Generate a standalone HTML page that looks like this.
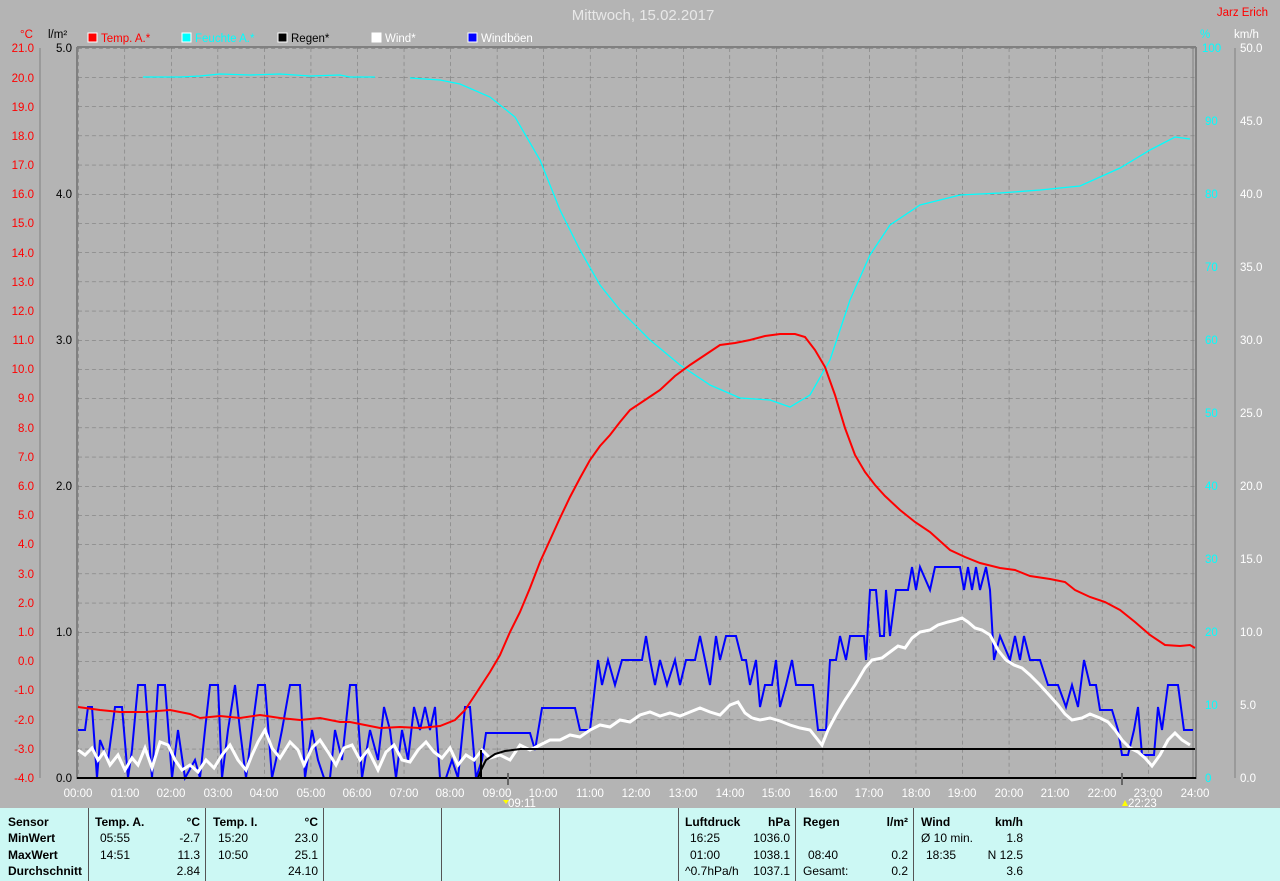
<!DOCTYPE html>
<html><head><meta charset="utf-8"><style>
body{margin:0;width:1280px;height:881px;overflow:hidden;background:#b4b4b4;font-family:"Liberation Sans",sans-serif}
svg{position:absolute;left:0;top:0}
.p{position:absolute;top:808px;height:73px;background:#ccf8f4;left:0;width:1280px}
.c{position:absolute;top:0;height:73px;border-left:1px solid #555;font-size:12px;color:#000}
.r{position:absolute;white-space:pre}
b{font-weight:bold}
</style></head><body>
<svg width="1280" height="881" font-family="Liberation Sans, sans-serif" font-size="11.5">
<defs><pattern id="g" x="78" y="48" width="46.54" height="29.2" patternUnits="userSpaceOnUse">
<line x1="0" y1="0" x2="46.54" y2="0" stroke="#6e6e6e" stroke-dasharray="4,3"/>
<line x1="0" y1="0" x2="0" y2="29.2" stroke="#6e6e6e" stroke-dasharray="4,3"/></pattern></defs>
<rect x="78" y="48" width="1118" height="730" fill="url(#g)"/>
<line x1="77" y1="47" x2="1196" y2="47" stroke="#808080" stroke-width="2"/>
<line x1="77" y1="47" x2="77" y2="779" stroke="#808080" stroke-width="2"/>
<line x1="1196" y1="47" x2="1196" y2="779" stroke="#808080" stroke-width="2"/>
<line x1="1193" y1="48" x2="1193" y2="778" stroke="#808080"/>
<line x1="40" y1="48" x2="40" y2="778" stroke="#808080"/>
<line x1="1235" y1="48" x2="1235" y2="778" stroke="#808080"/>
<line x1="77" y1="778" x2="1196" y2="778" stroke="#000" stroke-width="2"/>
<text x="643" y="20" text-anchor="middle" font-size="15" fill="#e8e8e8">Mittwoch, 15.02.2017</text>
<text x="1268" y="16" text-anchor="end" fill="#f00">Jarz Erich</text>
<text x="20" y="38" fill="#f00">°C</text><text x="48" y="38" fill="#000">l/m²</text>
<text x="1200" y="38" fill="#0ff">%</text><text x="1234" y="38" fill="#fff">km/h</text>
<g><rect x="88" y="33" width="9" height="9" fill="#f00" stroke="#fff"/><text x="101" y="42" fill="#f00">Temp. A.*</text>
<rect x="182" y="33" width="9" height="9" fill="#0ff" stroke="#fff"/><text x="195" y="42" fill="#0ff">Feuchte A.*</text>
<rect x="278" y="33" width="9" height="9" fill="#000" stroke="#fff"/><text x="291" y="42" fill="#000">Regen*</text>
<rect x="372" y="33" width="9" height="9" fill="#fff" stroke="#fff"/><text x="385" y="42" fill="#fff">Wind*</text>
<rect x="468" y="33" width="9" height="9" fill="#00f" stroke="#fff"/><text x="481" y="42" fill="#fff">Windböen</text></g>
<g fill="#f00" text-anchor="end">
<text x="34" y="52">21.0</text><text x="34" y="82">20.0</text><text x="34" y="111">19.0</text><text x="34" y="140">18.0</text><text x="34" y="169">17.0</text><text x="34" y="198">16.0</text><text x="34" y="227">15.0</text><text x="34" y="257">14.0</text><text x="34" y="286">13.0</text><text x="34" y="315">12.0</text><text x="34" y="344">11.0</text><text x="34" y="373">10.0</text><text x="34" y="402">9.0</text><text x="34" y="432">8.0</text><text x="34" y="461">7.0</text><text x="34" y="490">6.0</text><text x="34" y="519">5.0</text><text x="34" y="548">4.0</text><text x="34" y="578">3.0</text><text x="34" y="607">2.0</text><text x="34" y="636">1.0</text><text x="34" y="665">0.0</text><text x="34" y="694">-1.0</text><text x="34" y="724">-2.0</text><text x="34" y="753">-3.0</text><text x="34" y="782">-4.0</text></g>
<g fill="#000" text-anchor="end"><text x="72" y="52">5.0</text><text x="72" y="198">4.0</text><text x="72" y="344">3.0</text><text x="72" y="490">2.0</text><text x="72" y="636">1.0</text><text x="72" y="782">0.0</text></g>
<g fill="#0ff"><text x="1202" y="52">100</text><text x="1205" y="125">90</text><text x="1205" y="198">80</text><text x="1205" y="271">70</text><text x="1205" y="344">60</text><text x="1205" y="417">50</text><text x="1205" y="490">40</text><text x="1205" y="563">30</text><text x="1205" y="636">20</text><text x="1205" y="709">10</text><text x="1205" y="782">0</text></g>
<g fill="#fff"><text x="1240" y="52">50.0</text><text x="1240" y="125">45.0</text><text x="1240" y="198">40.0</text><text x="1240" y="271">35.0</text><text x="1240" y="344">30.0</text><text x="1240" y="417">25.0</text><text x="1240" y="490">20.0</text><text x="1240" y="563">15.0</text><text x="1240" y="636">10.0</text><text x="1240" y="709">5.0</text><text x="1240" y="782">0.0</text></g>
<g fill="#fff" text-anchor="middle">
<text x="78" y="797">00:00</text><text x="125" y="797">01:00</text><text x="171" y="797">02:00</text><text x="218" y="797">03:00</text><text x="264" y="797">04:00</text><text x="311" y="797">05:00</text><text x="357" y="797">06:00</text><text x="404" y="797">07:00</text><text x="450" y="797">08:00</text><text x="497" y="797">09:00</text><text x="543" y="797">10:00</text><text x="590" y="797">11:00</text><text x="636" y="797">12:00</text><text x="683" y="797">13:00</text><text x="730" y="797">14:00</text><text x="776" y="797">15:00</text><text x="823" y="797">16:00</text><text x="869" y="797">17:00</text><text x="916" y="797">18:00</text><text x="962" y="797">19:00</text><text x="1009" y="797">20:00</text><text x="1055" y="797">21:00</text><text x="1102" y="797">22:00</text><text x="1148" y="797">23:00</text><text x="1195" y="797">24:00</text></g>
<text x="508" y="807" fill="#fff">09:11</text><text x="1128" y="807" fill="#fff">22:23</text>
<path d="M503 800l3 4 3-4z" fill="#ff0"/><path d="M1122 806l3-6 3 6z" fill="#ff0"/>
<polyline fill="none" stroke="#0ff" stroke-width="1.3" points="143,77 180,77 200,76 220,74 250,75 280,74 310,76 340,75 350,77 375,77"/>
<polyline fill="none" stroke="#0ff" stroke-width="1.3" points="410,78 440,80 460,84 490,97 515,117 540,160 560,210 580,250 600,285 620,310 650,340 680,365 710,385 740,398 770,400 790,407 810,395 830,360 850,300 870,255 890,225 920,205 960,195 1000,193 1040,190 1080,186 1120,168 1150,150 1175,137 1190,139"/>
<polyline fill="none" stroke="#00f" stroke-width="2" points="78,730 85,730 88,707 92,707 97,778 100,740 108,760 115,707 122,707 128,778 132,750 138,685 145,685 152,778 158,685 165,685 172,778 178,730 185,778 195,760 200,778 205,730 210,685 218,685 222,778 228,730 235,685 240,730 246,778 252,730 258,685 265,685 272,778 276,760 282,730 290,685 300,685 305,778 312,730 318,760 324,778 330,778 335,730 342,760 350,685 356,685 362,778 370,730 378,760 384,707 390,730 396,778 402,730 408,760 414,707 420,730 425,707 430,730 435,707 440,778 446,778 452,760 458,778 465,707 470,707 476,778 482,760 486,733 500,733 530,733 535,750 542,708 575,708 580,730 590,730 598,660 602,685 608,660 615,685 622,660 642,660 646,636 650,660 655,685 660,660 667,685 675,660 680,685 686,660 695,660 700,636 705,660 710,685 716,636 720,660 726,636 736,636 742,660 746,660 750,685 756,660 760,707 765,685 772,685 776,660 780,707 786,685 792,660 796,685 813,685 818,730 826,730 830,660 836,660 840,636 846,660 850,636 864,636 866,660 870,590 876,590 880,636 884,636 886,590 890,636 896,590 900,590 904,590 908,590 912,567 916,590 920,567 930,590 935,567 960,567 964,590 968,567 972,590 976,567 980,590 986,567 990,590 994,660 1000,636 1010,660 1015,636 1020,660 1024,636 1030,660 1040,660 1048,685 1058,685 1066,707 1072,685 1078,707 1084,660 1090,685 1096,685 1100,710 1112,710 1118,730 1122,755 1128,755 1134,730 1138,707 1142,755 1154,755 1158,707 1162,730 1168,685 1178,685 1184,730 1193,730"/>
<polyline fill="none" stroke="#fff" stroke-width="3" points="78,750 85,755 92,748 98,760 104,752 110,765 118,755 125,770 132,758 138,765 145,748 152,768 160,742 168,745 175,760 182,770 190,765 198,772 206,760 214,768 222,755 230,745 238,760 246,770 252,755 258,742 265,730 272,748 280,758 290,742 298,750 304,765 312,748 320,740 328,752 336,765 344,748 352,745 360,760 368,750 378,770 386,752 394,745 402,760 410,762 418,750 426,742 434,752 442,758 450,748 458,765 466,755 474,760 482,750 490,758 500,755 510,760 520,745 530,750 540,745 550,740 560,740 570,735 580,737 590,730 600,725 610,727 620,720 630,722 640,715 650,712 660,716 670,713 680,716 690,712 700,708 710,712 720,715 730,705 738,702 745,713 752,718 760,720 770,718 780,721 790,725 800,728 810,730 818,740 822,745 828,730 836,715 845,700 855,685 865,668 872,660 882,658 890,652 898,646 905,648 912,638 920,632 930,630 938,625 948,622 956,620 962,618 968,622 975,628 982,630 990,635 998,650 1006,660 1014,665 1022,668 1030,675 1040,685 1050,696 1058,705 1065,714 1072,720 1082,718 1090,714 1100,718 1108,722 1115,730 1122,740 1130,748 1138,752 1145,758 1152,766 1160,755 1168,740 1175,733 1182,740 1190,745"/>
<polyline fill="none" stroke="#000" stroke-width="2" points="77,778 478,778 481,770 486,760 495,754 505,751 520,749 540,749 1195,749"/>
<polyline fill="none" stroke="#000" stroke-width="2" points="481,750 481,778"/>
<polyline fill="none" stroke="#f00" stroke-width="2" points="78,707 100,710 120,712 145,712 170,710 190,714 200,718 220,716 240,718 260,715 280,718 300,720 320,718 340,722 350,722 370,726 380,728 400,727 420,728 440,726 455,720 465,710 475,695 490,672 500,655 510,632 520,612 530,588 540,562 550,540 560,518 570,497 580,478 590,460 600,446 610,435 620,422 630,410 645,400 660,390 675,376 690,365 705,355 720,345 735,343 750,340 765,336 780,334 795,334 805,337 815,350 825,367 835,395 845,428 855,455 865,472 875,485 885,496 900,510 915,522 930,532 950,550 965,557 980,563 1000,568 1015,570 1030,576 1050,579 1065,582 1075,590 1090,597 1105,602 1120,610 1135,622 1150,635 1165,645 1180,646 1190,645 1195,648"/>
<line x1="1122" y1="773" x2="1122" y2="785" stroke="#666" stroke-width="2"/><line x1="508" y1="773" x2="508" y2="785" stroke="#666" stroke-width="2"/>
</svg>
<div class="p">
<div class="c" style="left:0;border:none;width:88px"><div class="r" style="left:8px;top:7px"><b>Sensor</b></div><div class="r" style="left:8px;top:23px"><b>MinWert</b></div><div class="r" style="left:8px;top:40px"><b>MaxWert</b></div><div class="r" style="left:8px;top:56px"><b>Durchschnitt</b></div></div>
<div class="c" style="left:88px;width:117px"><div class="r" style="left:6px;top:7px"><b>Temp. A.</b></div><div class="r" style="right:6px;top:7px"><b>°C</b></div><div class="r" style="left:11px;top:23px">05:55</div><div class="r" style="right:6px;top:23px">-2.7</div><div class="r" style="left:11px;top:40px">14:51</div><div class="r" style="right:6px;top:40px">11.3</div><div class="r" style="right:6px;top:56px">2.84</div></div>
<div class="c" style="left:205px;width:118px"><div class="r" style="left:7px;top:7px"><b>Temp. I.</b></div><div class="r" style="right:6px;top:7px"><b>°C</b></div><div class="r" style="left:12px;top:23px">15:20</div><div class="r" style="right:6px;top:23px">23.0</div><div class="r" style="left:12px;top:40px">10:50</div><div class="r" style="right:6px;top:40px">25.1</div><div class="r" style="right:6px;top:56px">24.10</div></div>
<div class="c" style="left:323px;width:118px"></div>
<div class="c" style="left:441px;width:118px"></div>
<div class="c" style="left:559px;width:118px"></div>
<div class="c" style="left:678px;width:117px"><div class="r" style="left:6px;top:7px"><b>Luftdruck</b></div><div class="r" style="right:6px;top:7px"><b>hPa</b></div><div class="r" style="left:11px;top:23px">16:25</div><div class="r" style="right:6px;top:23px">1036.0</div><div class="r" style="left:11px;top:40px">01:00</div><div class="r" style="right:6px;top:40px">1038.1</div><div class="r" style="left:6px;top:56px">^0.7hPa/h</div><div class="r" style="right:6px;top:56px">1037.1</div></div>
<div class="c" style="left:795px;width:118px"><div class="r" style="left:7px;top:7px"><b>Regen</b></div><div class="r" style="right:6px;top:7px"><b>l/m²</b></div><div class="r" style="left:12px;top:40px">08:40</div><div class="r" style="right:6px;top:40px">0.2</div><div class="r" style="left:7px;top:56px">Gesamt:</div><div class="r" style="right:6px;top:56px">0.2</div></div>
<div class="c" style="left:913px;width:118px"><div class="r" style="left:7px;top:7px"><b>Wind</b></div><div class="r" style="right:9px;top:7px"><b>km/h</b></div><div class="r" style="left:7px;top:23px">Ø 10 min.</div><div class="r" style="right:9px;top:23px">1.8</div><div class="r" style="left:12px;top:40px">18:35</div><div class="r" style="right:9px;top:40px">N 12.5</div><div class="r" style="right:9px;top:56px">3.6</div></div>
</div>
</body></html>
